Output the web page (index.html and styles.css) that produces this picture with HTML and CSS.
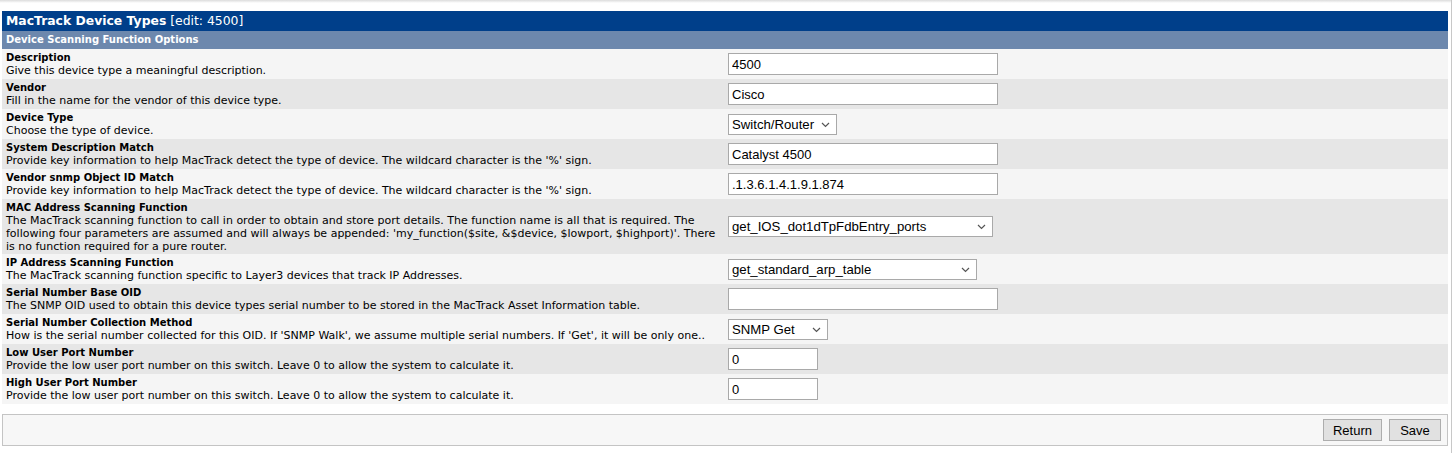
FILE: index.html
```html
<!DOCTYPE html>
<html>
<head>
<meta charset="utf-8">
<title>MacTrack Device Types</title>
<link rel="stylesheet" href="styles.css">
</head>
<body>
<div class="topshade"></div>
<div class="page">
  <div class="panel">
    <div class="title"><b>MacTrack Device Types</b> [edit: 4500]</div>
    <div class="subtitle">Device Scanning Function Options</div>

    <div class="row odd">
      <div class="text"><b>Description</b><br>Give this device type a meaningful description.</div>
      <div class="field"><input class="txt w270" type="text" value="4500"></div>
    </div>
    <div class="row even">
      <div class="text"><b>Vendor</b><br>Fill in the name for the vendor of this device type.</div>
      <div class="field"><input class="txt w270" type="text" value="Cisco"></div>
    </div>
    <div class="row odd">
      <div class="text"><b>Device Type</b><br>Choose the type of device.</div>
      <div class="field"><span class="sel w109"><select><option>Switch/Router</option></select><svg class="chev" width="9" height="6" viewBox="0 0 9 6"><path d="M1 1l3.5 3.5L8 1" fill="none" stroke="#555" stroke-width="1.2"/></svg></span></div>
    </div>
    <div class="row even">
      <div class="text"><b>System Description Match</b><br>Provide key information to help MacTrack detect the type of device. The wildcard character is the '%' sign.</div>
      <div class="field"><input class="txt w270" type="text" value="Catalyst 4500"></div>
    </div>
    <div class="row odd">
      <div class="text"><b>Vendor snmp Object ID Match</b><br>Provide key information to help MacTrack detect the type of device. The wildcard character is the '%' sign.</div>
      <div class="field"><input class="txt w270" type="text" value=".1.3.6.1.4.1.9.1.874"></div>
    </div>
    <div class="row even">
      <div class="text"><b>MAC Address Scanning Function</b><br>The MacTrack scanning function to call in order to obtain and store port details. The function name is all that is required. The following four parameters are assumed and will always be appended: 'my_function($site, &amp;$device, $lowport, $highport)'. There is no function required for a pure router.</div>
      <div class="field"><span class="sel w265"><select><option>get_IOS_dot1dTpFdbEntry_ports</option></select><svg class="chev" width="9" height="6" viewBox="0 0 9 6"><path d="M1 1l3.5 3.5L8 1" fill="none" stroke="#555" stroke-width="1.2"/></svg></span></div>
    </div>
    <div class="row odd">
      <div class="text"><b>IP Address Scanning Function</b><br>The MacTrack scanning function specific to Layer3 devices that track IP Addresses.</div>
      <div class="field"><span class="sel w249"><select><option>get_standard_arp_table</option></select><svg class="chev" width="9" height="6" viewBox="0 0 9 6"><path d="M1 1l3.5 3.5L8 1" fill="none" stroke="#555" stroke-width="1.2"/></svg></span></div>
    </div>
    <div class="row even">
      <div class="text"><b>Serial Number Base OID</b><br>The SNMP OID used to obtain this device types serial number to be stored in the MacTrack Asset Information table.</div>
      <div class="field"><input class="txt w270" type="text" value=""></div>
    </div>
    <div class="row odd">
      <div class="text"><b>Serial Number Collection Method</b><br>How is the serial number collected for this OID. If 'SNMP Walk', we assume multiple serial numbers. If 'Get', it will be only one..</div>
      <div class="field"><span class="sel w100"><select><option>SNMP Get</option></select><svg class="chev" width="9" height="6" viewBox="0 0 9 6"><path d="M1 1l3.5 3.5L8 1" fill="none" stroke="#555" stroke-width="1.2"/></svg></span></div>
    </div>
    <div class="row even">
      <div class="text"><b>Low User Port Number</b><br>Provide the low user port number on this switch. Leave 0 to allow the system to calculate it.</div>
      <div class="field"><input class="txt w90" type="text" value="0"></div>
    </div>
    <div class="row odd">
      <div class="text"><b>High User Port Number</b><br>Provide the low user port number on this switch. Leave 0 to allow the system to calculate it.</div>
      <div class="field"><input class="txt w90" type="text" value="0"></div>
    </div>
  </div>

  <div class="actions">
    <button class="btn">Return</button>
    <button class="btn">Save</button>
  </div>
</div>
</body>
</html>
```

FILE: styles.css
```css
html, body {
  margin: 0;
  padding: 0;
  background: #ffffff;
}
body {
  font-family: "DejaVu Sans", Verdana, sans-serif;
  font-size: 11px;
  color: #000;
  width: 1452px;
  min-height: 453px;
  border-right: 1px solid #c8c8c8;
  box-sizing: border-box;
}
.topshade {
  height: 3px;
  background: linear-gradient(#dcdcdc, #ffffff);
}
.page {
  padding: 8px 2px 0 2px;
  width: 1446px;
}
.title {
  background: #003f8a;
  color: #fff;
  font-size: 12.4px;
  height: 20px;
  line-height: 20px;
  padding: 0 4px;
}
.title b { font-weight: bold; }
.subtitle {
  background: #6d88ad;
  color: #fff;
  font-weight: bold;
  font-size: 10px;
  height: 18px;
  line-height: 18px;
  padding: 0 4px;
}
.row {
  display: grid;
  grid-template-columns: 50% 50%;
  min-height: 30px;
}
.row.odd { background: #f5f5f5; }
.row.even { background: #e6e6e6; }
.text {
  padding: 2px 5px 1px 4px;
  line-height: 13px;
  font-size: 11px;
}
.text b {
  font-size: 10px;
}
.field {
  display: flex;
  align-items: center;
  padding-left: 3px;
}
.txt {
  box-sizing: border-box;
  height: 22px;
  border: 1px solid #a9a9a9;
  background: #fff;
  font-family: "Liberation Sans", Arial, sans-serif;
  font-size: 13px;
  padding: 1px 3px;
  margin: 0;
  color: #000;
  outline: none;
}
.w270 { width: 270px; }
.w90 { width: 90px; }
.sel {
  position: relative;
  display: inline-block;
  height: 21px;
}
.sel select {
  -webkit-appearance: none;
  appearance: none;
  box-sizing: border-box;
  width: 100%;
  height: 21px;
  border: 1px solid #a9a9a9;
  border-radius: 0;
  background: #fff;
  font-family: "Liberation Sans", Arial, sans-serif;
  font-size: 13.2px;
  padding: 0 18px 0 3px;
  margin: 0;
  color: #000;
}
.sel .chev {
  position: absolute;
  right: 7px;
  top: 8px;
  pointer-events: none;
}
.w109 { width: 109px; }
.w265 { width: 265px; }
.w249 { width: 249px; }
.w100 { width: 100px; }
.actions {
  margin-top: 10px;
  height: 32px;
  box-sizing: border-box;
  border: 1px solid #c4c4c4;
  background: #f7f7f7;
  display: flex;
  justify-content: flex-end;
  align-items: center;
  gap: 7px;
  padding-right: 6px;
}
.btn {
  box-sizing: border-box;
  height: 22px;
  min-width: 52px;
  padding: 0 9px;
  border: 1px solid #adadad;
  background: #e1e1e1;
  font-family: "Liberation Sans", Arial, sans-serif;
  font-size: 13px;
  color: #000;
  border-radius: 0;
}
```
